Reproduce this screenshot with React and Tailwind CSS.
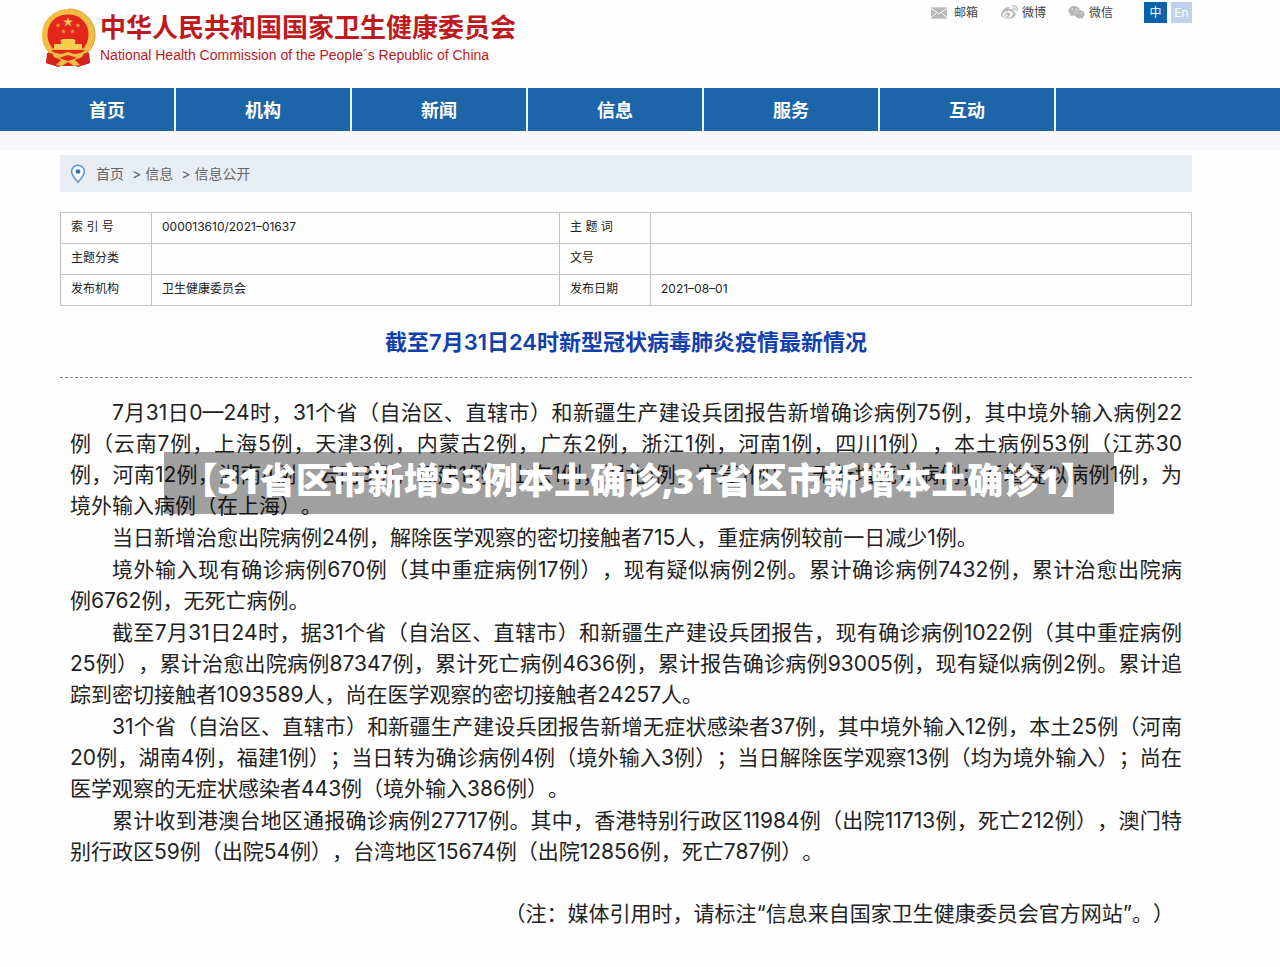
import { FaWeixin, FaWeibo } from "react-icons/fa";

const navItems = ["首页", "机构", "新闻", "信息", "服务", "互动"];

const infoRows = [
  ["索 引 号", "000013610/2021–01637", "主 题 词", ""],
  ["主题分类", "", "文号", ""],
  ["发布机构", "卫生健康委员会", "发布日期", "2021–08–01"],
];

// each paragraph is a list of full-width lines, the last one is left ragged
const paragraphs = [
  [
    "7月31日0—24时，31个省（自治区、直辖市）和新疆生产建设兵团报告新增确诊病例75例，其中境外输入病例22",
    "例（云南7例，上海5例，天津3例，内蒙古2例，广东2例，浙江1例，河南1例，四川1例），本土病例53例（江苏30",
    "例，河南12例，湖南4例，云南3例，福建1例，山东1例，湖北1例，宁夏1例），无新增死亡病例；新增疑似病例1例，为",
    "境外输入病例（在上海）。",
  ],
  ["当日新增治愈出院病例24例，解除医学观察的密切接触者715人，重症病例较前一日减少1例。"],
  [
    "境外输入现有确诊病例670例（其中重症病例17例），现有疑似病例2例。累计确诊病例7432例，累计治愈出院病",
    "例6762例，无死亡病例。",
  ],
  [
    "截至7月31日24时，据31个省（自治区、直辖市）和新疆生产建设兵团报告，现有确诊病例1022例（其中重症病例",
    "25例），累计治愈出院病例87347例，累计死亡病例4636例，累计报告确诊病例93005例，现有疑似病例2例。累计追",
    "踪到密切接触者1093589人，尚在医学观察的密切接触者24257人。",
  ],
  [
    "31个省（自治区、直辖市）和新疆生产建设兵团报告新增无症状感染者37例，其中境外输入12例，本土25例（河南",
    "20例，湖南4例，福建1例）；当日转为确诊病例4例（境外输入3例）；当日解除医学观察13例（均为境外输入）；尚在",
    "医学观察的无症状感染者443例（境外输入386例）。",
  ],
  [
    "累计收到港澳台地区通报确诊病例27717例。其中，香港特别行政区11984例（出院11713例，死亡212例），澳门特",
    "别行政区59例（出院54例），台湾地区15674例（出院12856例，死亡787例）。",
  ],
];

function Emblem() {
  return (
    <svg viewBox="0 0 56 60" className="h-15 w-14 shrink-0" aria-hidden="true">
      <path d="M9 42L6 55l12 3h21l11-3-2-13z" fill="#d3211c" />
      <path d="M28.500 1C43 1 55 12 55 27c0 9-4 15-10 19l-8 3-9-3-9 3-8-3C5 42 2 36 2 27 2 12 14 1 28.500 1z" fill="#f0bd45" />
      <path d="M28.500 1C43 1 55 12 55 27c0 8-3 13-7 17" fill="none" stroke="#d99a35" strokeWidth="1" />
      <path d="M28 6.500c12 0 20.500 8.500 20.500 20 0 6-2 10-5 14h-31c-3-4-5-8-5-14 0-11.500 8.500-20 20.500-20z" fill="#e5261c" />
      <path d="M28 9l1.300 3.400 3.700.1-2.900 2.300 1 3.600-3.100-2.100-3.100 2.100 1-3.600-2.900-2.300 3.700-.1z" fill="#f3c352" />
      <g fill="#ef9a3c">
        <path d="M18 15l.7 1.500 1.600.2-1.200 1.100.3 1.600-1.400-.8-1.400.8.3-1.600-1.200-1.100 1.600-.2z" />
        <path d="M38 15l.7 1.500 1.600.2-1.200 1.100.3 1.600-1.400-.8-1.400.8.3-1.600-1.200-1.100 1.600-.2z" />
        <path d="M23.500 21l.7 1.500 1.600.2-1.200 1.100.3 1.600-1.400-.8-1.400.8.3-1.600-1.200-1.100 1.600-.2z" />
        <path d="M32.500 21l.7 1.500 1.600.2-1.200 1.100.3 1.600-1.400-.8-1.400.8.3-1.600-1.200-1.100 1.600-.2z" />
      </g>
      <path d="M22 31h12l2 2.500h-1V36h7v5H14v-5h7v-2.500h-1z" fill="#f6cf52" />
      <path d="M11 42h34l-3 3-8 1-6-2-6 2-8-1z" fill="#e5261c" />
      <path d="M7 45l9 1 6 3-3 4 2 5-3 1-12-4zM49 45l-9 1-6 3 3 4-2 5 3 1 12-4z" fill="#d3211c" />
      <path d="M11 43l9 4 8-3 8 3 9-4-3 6-7 3 5 5-6 1-6-4-6 4-6-1 5-5-7-3z" fill="#f0bd45" />
      <path d="M19 50l9-3 9 3-9 3z" fill="#e5261c" />
      <path d="M24 58l4-3 4 3z" fill="#d3211c" />
    </svg>
  );
}

function MailIcon() {
  return (
    <svg viewBox="0 0 17 12" className="h-3 w-4" aria-hidden="true">
      <rect width="17" height="12" fill="#b9b9b9" />
      <path d="M0 1l8.500 6L17 1M0 11l6-5.500M17 11l-6-5.500" fill="none" stroke="#fff" strokeWidth="1" />
    </svg>
  );
}

function PinIcon() {
  return (
    <svg viewBox="0 0 16 20" className="mr-[10px] h-5 w-4" aria-hidden="true">
      <path d="M8 1.200a6.400 6.400 0 0 1 6.400 6.400C14.400 11 11 15 8 18.200 5 15 1.600 11 1.600 7.600A6.400 6.400 0 0 1 8 1.200z" fill="#f4f9fd" stroke="#5a93cb" strokeWidth="1.500" />
      <circle cx="8" cy="7.500" r="2.300" fill="#2f6fb3" />
    </svg>
  );
}

function TopLinks() {
  return (
    <div className="flex items-center pt-[2px] text-xs text-[#444]">
      <a href="#mail" className="mr-[23px] flex items-center gap-[7px]"><MailIcon />邮箱</a>
      <a href="#weibo" className="mr-[22px] flex items-center gap-1"><FaWeibo size={17} color="#bababa" />微博</a>
      <a href="#weixin" className="mr-[31px] flex items-center gap-1"><FaWeixin size={17} color="#b4b4b4" />微信</a>
      <button className="mr-1 h-[21px] w-[23px] bg-[#0b63ad] text-white">中</button>
      <button className="h-[21px] w-[21px] bg-[#bfd2ea] text-white">En</button>
    </div>
  );
}

export default function App() {
  return (
    <div className="relative min-h-screen bg-[#fefefe] font-['Inter','Noto_Sans_CJK_SC',sans-serif] text-[#222] [text-spacing-trim:space-all]">
      <header className="flex h-22 items-start justify-between pr-22 pl-10">
        <a href="#home" className="flex gap-1 pt-2">
          <Emblem />
          <div className="pt-px text-[#bd1a1e]">
            <h1 className="text-[26px] leading-[38px] font-bold">中华人民共和国国家卫生健康委员会</h1>
            <p className="font-['Liberation_Sans',sans-serif] text-sm leading-4">
              National Health Commission of the People´s Republic of China
            </p>
          </div>
        </a>
        <TopLinks />
      </header>

      <nav className="flex h-[43px] bg-[#1c65a8] pl-10 text-lg font-bold text-white">
        {navItems.map((item, i) => (
          <a
            key={item}
            href={`#nav-${i}`}
            className="flex w-44 items-center justify-center border-r-2 border-[#e8f3fb] pt-[2px] first:w-34"
          >
            {item}
          </a>
        ))}
      </nav>
      <div className="h-[19px] bg-[#f7f6fa]" />

      <main className="mr-22 ml-15 pt-[5px]">
        <div className="flex h-[37px] items-center bg-[#e8edf4] pl-[10px] text-sm text-[#666]">
          <PinIcon />
          <a href="#home">首页</a>
          <span className="mr-1 ml-2">&gt;</span>
          <a href="#info">信息</a>
          <span className="mr-1 ml-2">&gt;</span>
          <a href="#open">信息公开</a>
        </div>

        <table className="mt-5 w-full table-fixed border-collapse text-xs">
          <colgroup>
            <col className="w-[91px]" />
            <col className="w-[408px]" />
            <col className="w-[91px]" />
            <col />
          </colgroup>
          <tbody>
            {infoRows.map((row) => (
              <tr key={row[0]} className="h-[31px]">
                {row.map((cell, i) =>
                  i % 2 === 0 ? (
                    <th key={i} scope="row" className="border border-[#c3c1c8] px-[10px] pb-[2px] text-left font-normal">{cell}</th>
                  ) : (
                    <td key={i} className="border border-[#c3c1c8] px-[10px] pb-[2px]">{cell}</td>
                  )
                )}
              </tr>
            ))}
          </tbody>
        </table>

        <h2 className="mt-5 border-b border-dashed border-[#888] pb-[19px] text-center text-[22px] leading-8 font-semibold text-[#123fae]">
          截至7月31日24时新型冠状病毒肺炎疫情最新情况
        </h2>

        <article className="mt-[19px] space-y-px px-[10px] text-justify text-[21px] leading-[31px]">
          {paragraphs.map((lines) => (
            <p key={lines[0]}>
              {lines.map((line) => (
                <span
                  key={line}
                  className="block [text-align-last:justify] first:indent-[42px] last:[text-align-last:left]"
                >
                  {line}
                </span>
              ))}
            </p>
          ))}
        </article>
        <p className="mt-[31px] pr-[18px] text-right text-[21px] leading-[31px]">
          （注：媒体引用时，请标注“信息来自国家卫生健康委员会官方网站”。）
        </p>
      </main>

      {/* caption banner over the article */}
      <div className="absolute inset-x-0 top-[452px] mr-[166px] ml-[164px] flex h-[62px] justify-center bg-black/37 font-['Open_Sans','Noto_Sans_CJK_SC',sans-serif] text-4xl leading-[58px] font-black whitespace-nowrap text-white">
        【31省区市新增53例本土确诊,31省区市新增本土确诊1】
      </div>
    </div>
  );
}
